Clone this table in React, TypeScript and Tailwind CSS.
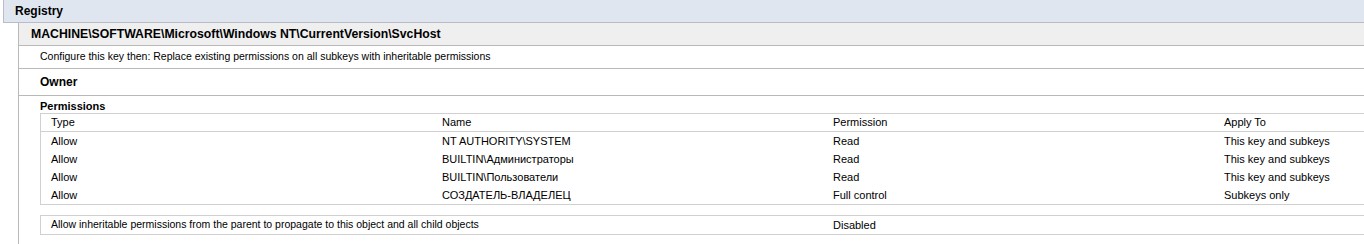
import React from 'react';

const rows = [
  { type: 'Allow', name: 'NT AUTHORITY\\SYSTEM', perm: 'Read', apply: 'This key and subkeys' },
  { type: 'Allow', name: 'BUILTIN\\Администраторы', perm: 'Read', apply: 'This key and subkeys' },
  { type: 'Allow', name: 'BUILTIN\\Пользователи', perm: 'Read', apply: 'This key and subkeys' },
  { type: 'Allow', name: 'СОЗДАТЕЛЬ-ВЛАДЕЛЕЦ', perm: 'Full control', apply: 'Subkeys only' },
];

function Cell({ children }: { children: React.ReactNode }) {
  return <div className="w-[391px] shrink-0 pl-[10px] whitespace-nowrap">{children}</div>;
}

export default function App() {
  return (
    <div className="w-[1364px] h-[244px] overflow-hidden bg-white text-[11px] text-black font-['Liberation_Sans',Arial,sans-serif]">
      {/* Header */}
      <div className="ml-[3px] h-[23px] flex items-center pl-[11px] bg-[#dfe6ef] border-l border-b border-[#b9bec6] font-bold text-[12px]">
        Registry
      </div>

      <div className="ml-[18px] border-l border-[#b9b9b9] h-[221px]">
        <div className="h-[23px] flex items-center pl-[12px] bg-[#efefef] border-b border-[#b9b9b9] font-bold text-[12.25px]">
          MACHINE\SOFTWARE\Microsoft\Windows NT\CurrentVersion\SvcHost
        </div>
        <div className="h-[23px] flex items-center pl-[21px] border-b border-[#b9b9b9] text-[10.5px]">
          Configure this key then: Replace existing permissions on all subkeys with inheritable permissions
        </div>
        <div className="h-[27px] flex items-center pl-[21px] border-b border-[#b9b9b9] font-bold text-[12px]">
          Owner
        </div>

        <div className="pl-[21px]">
          <div className="h-[17px] pt-[3px] font-bold text-[11px] leading-[14px]">Permissions</div>
          <div className="border-t border-l border-b border-[#d0d0d0]">
            <div className="flex h-[18px] items-center border-b border-[#d0d0d0]">
              <Cell>Type</Cell>
              <Cell>Name</Cell>
              <Cell>Permission</Cell>
              <Cell>Apply To</Cell>
            </div>
            {rows.map((r, i) => (
              <div key={i} className="flex h-[18px] items-center">
                <Cell>{r.type}</Cell>
                <Cell>{r.name}</Cell>
                <Cell>{r.perm}</Cell>
                <Cell>{r.apply}</Cell>
              </div>
            ))}
          </div>

          <div className="mt-[10px] flex h-[20px] items-center border-t border-l border-b border-[#d0d0d0]">
            <div className="w-[782px] shrink-0 pl-[10px] whitespace-nowrap text-[10.5px]">
              Allow inheritable permissions from the parent to propagate to this object and all child objects
            </div>
            <Cell>Disabled</Cell>
          </div>
        </div>
      </div>
    </div>
  );
}
